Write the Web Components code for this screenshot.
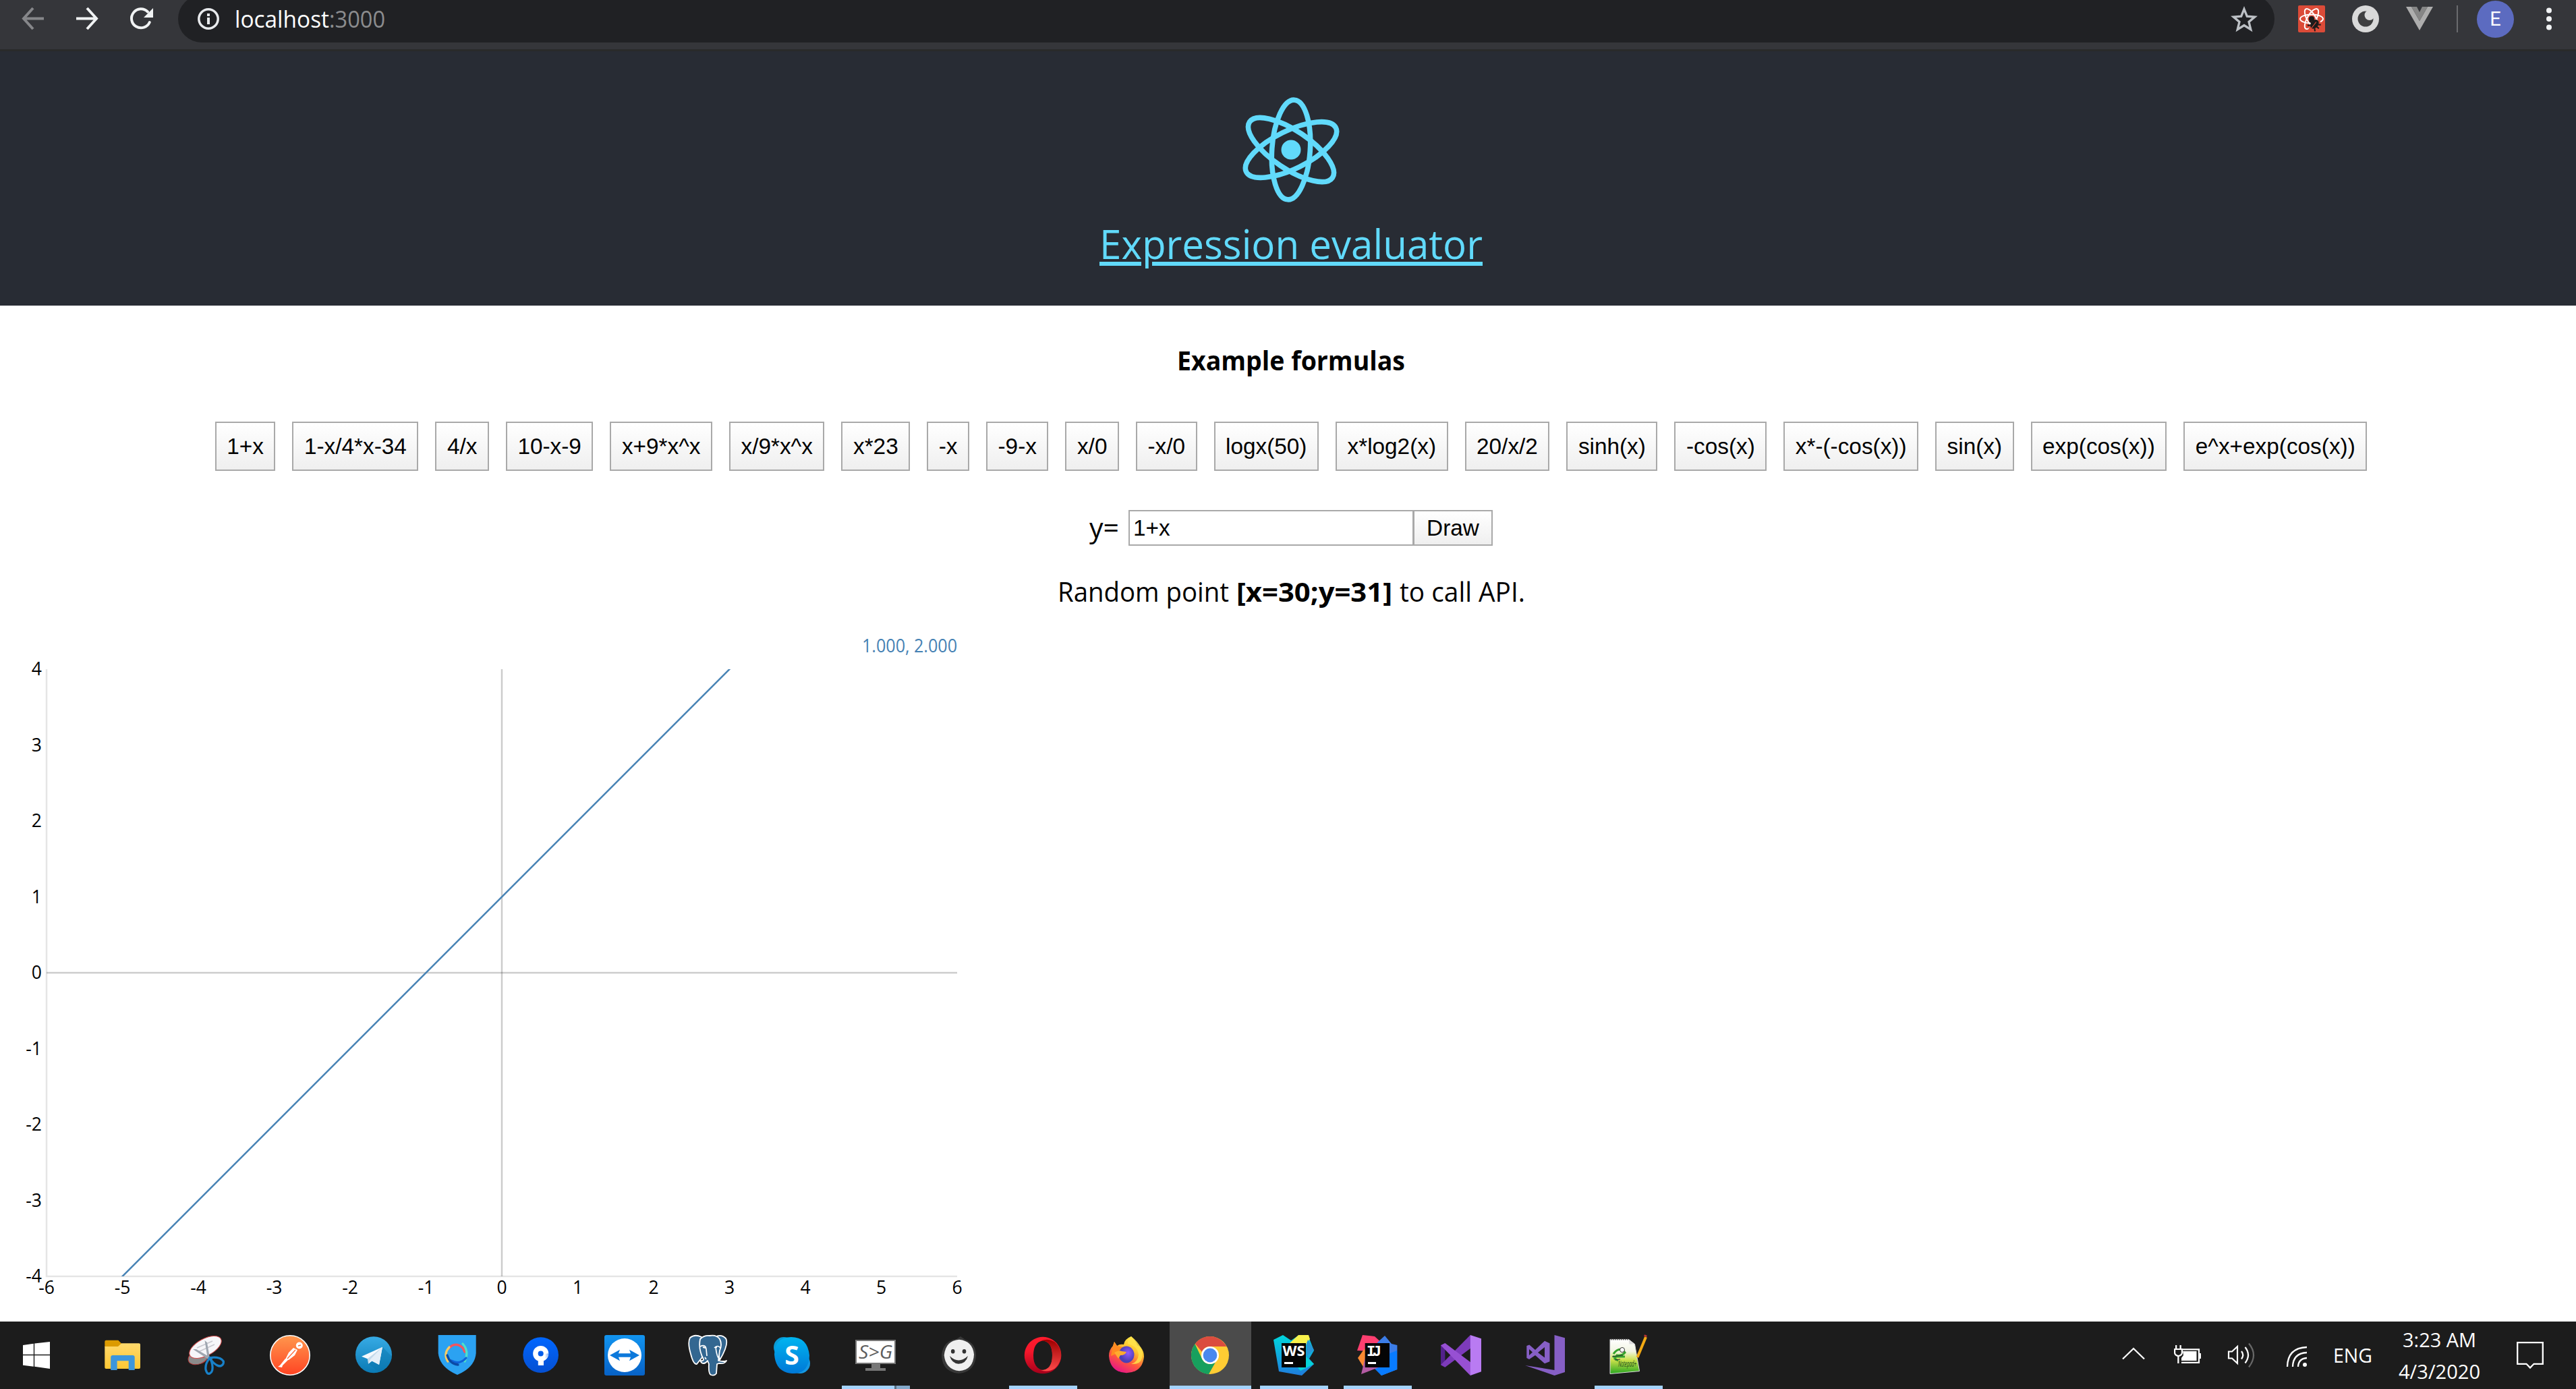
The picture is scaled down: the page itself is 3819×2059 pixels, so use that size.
<!DOCTYPE html>
<html lang="en">
<head>
<meta charset="utf-8">
<title>Expression evaluator</title>
<style>
html,body{margin:0;padding:0;height:100%;overflow:hidden;background:#fff}
body{font-family:"Open Sans","Noto Sans",sans-serif}
</style>
</head>
<body>
<desktop-screen></desktop-screen>
<script>
const define = (name, html, setup) => customElements.define(name, class extends HTMLElement {
  connectedCallback() {
    if (this.shadowRoot) return;
    const t = document.createElement('template');
    t.innerHTML = typeof html === 'function' ? html(this) : html;
    this.attachShadow({mode: 'open'}).appendChild(t.content.cloneNode(true));
    if (setup) setup(this);
  }
});

/* Text condensed or expanded to an exact advance width. */
define('fit-text', `<style>:host{display:block;white-space:nowrap;flex:none}span{display:inline-block;transform-origin:0 50%;text-decoration:inherit;text-decoration-thickness:inherit}</style><span><slot></slot></span>`, el => {
  const w = +el.getAttribute('w');
  el.style.width = w + 'px';
  const s = el.shadowRoot.querySelector('span');
  s.style.transform = `scaleX(${w / s.getBoundingClientRect().width})`;
});

const ICONS = {
  back: `<g fill="none" stroke="#86878a" stroke-width="4"><path d="M36 19.5H7M20 4L6 19.5L20 35"/></g>`,
  forward: `<g fill="none" stroke="#f1f3f4" stroke-width="4"><path d="M5 19.5h29M21 4l14 15.500L21 35"/></g>`,
  reload: `<path d="M31.800 25A14 14 0 1 1 29 9.500" fill="none" stroke="#f1f3f4" stroke-width="4" stroke-linecap="round"/><path d="M37 4v14H23z" fill="#f1f3f4"/>`,
  info: `<circle cx="20" cy="20" r="14.200" fill="none" stroke="#e8eaed" stroke-width="3.500"/><path d="M18 18h4v10h-4zM18 12h4v4h-4z" fill="#e8eaed"/>`,
  star: `<path d="M20 5.500l4.300 10.600 11.500.9-8.800 7.400 2.800 11.200L20 29.500l-9.800 6.100L13 24.400 4.200 17l11.500-.9z" fill="none" stroke="#bdc1c6" stroke-width="3.300"/>`,
  reactdev: `<rect width="40" height="40" rx="2" fill="#db4b38"/><g fill="none" stroke="#fff" stroke-width="2"><ellipse cx="20" cy="20" rx="17" ry="6.500"/><ellipse cx="20" cy="20" rx="17" ry="6.500" transform="rotate(60 20 20)"/><ellipse cx="20" cy="20" rx="17" ry="6.500" transform="rotate(120 20 20)"/></g><path d="M22 21l11 2-1 12-10 3-7-2z" fill="#db4b38"/><circle cx="20" cy="20" r="4" fill="#1b1b1b"/><g transform="rotate(38 25 27)"><ellipse cx="25" cy="28" rx="5.500" ry="7.500" fill="#1b1b1b"/><path d="M17 23l3 2M33 23l-3 2M16 29h18M18 36l3-3M32 36l-3-3" stroke="#1b1b1b" stroke-width="2"/><path d="M25 24v12" stroke="#db4b38"/></g>`,
  moon: `<circle cx="20" cy="20" r="20" fill="#d9d9d9"/><circle cx="20" cy="20" r="11.500" fill="#3f3f40"/><circle cx="26" cy="14.500" r="7.500" fill="#d9d9d9"/>`,
  vue: `<path d="M0 2h8l12 21L32 2h8L20 37z" fill="#adadad"/><path d="M8 2h8l4 8 4-8h8L20 23z" fill="#868686"/>`,
  dots: `<g fill="#f1f3f4"><circle cx="20" cy="7.500" r="4"/><circle cx="20" cy="20" r="4"/><circle cx="20" cy="32.500" r="4"/></g>`,
  chevron: `<path d="M4 25.500L20 10l16 15.500" fill="none" stroke="#fff" stroke-width="2.300"/>`,
  battery: `<path d="M11 11.300h26v19.500H11" fill="none" stroke="#fff" stroke-width="2.200"/><path d="M13 14h20.500v14H11v-4l3-4zM37 17h3v8h-3zM2 5h2.300v5H2zM8.500 5h2.300v5H8.500zM0 10h13v7q-1 4-5.500 5v10H5.200V22Q1 21 0 17z" fill="#fff"/><path d="M2.200 12h8.600v5q-1.600 3-4.300 3T2.200 17z" fill="#1c1c1c"/>`,
  speaker: `<g fill="none" stroke="#fff" stroke-width="2.200"><path d="M1 14.500h5L14 7v25l-8-7.500H1z"/><path d="M20 14q4.500 5.500 0 11.500M25.500 8q9 11.500 0 23.500"/><path d="M31 2.500q14 17 0 35" stroke="#686868"/></g>`,
  wifi: `<g fill="none" stroke="#fff" stroke-width="2.300"><path d="M8 37Q8.500 9 37 8M16 37q.5-20 21-21M24 37q.5-12 13-13"/></g><circle cx="34" cy="34" r="3" fill="#fff"/>`,
  notice: `<path d="M1.200 1.200h37.600v31.600H25.500L20 38.500l-5.500-5.700H1.200z" fill="none" stroke="#fff" stroke-width="2.300"/>`,
};

const APPS = {
  start: `<path d="M12 17l15.800-2.200v16H12zM29.200 14.600L52 12v18.800H29.200zM12 32.200h15.800v16.500L12 46.700zM29.200 32.200H52V52l-22.800-3.200z" fill="#fff"/>`,
  explorer: `<defs><linearGradient id="e" x2="0" y2="1"><stop stop-color="#ffd96c"/><stop offset="1" stop-color="#fcc734"/></linearGradient></defs><path d="M5.300 12q0-2.300 2-2.300h18L30 14.500 26 20H5.300z" fill="#dc9b00"/><path d="M5.300 19H25l5-4.700h26q2 0 2 2V50q0 2-2 2H7.300q-2 0-2-2z" fill="url(#e)"/><path d="M14.200 54V35q0-3 3-3h29.500q3 0 3 3v19h-9V40.300H23.600V54z" fill="#3c96dc"/>`,
  snip: `<ellipse cx="20" cy="35" rx="15.500" ry="10" transform="rotate(-20 20 35)" fill="#8b8b8b" stroke="#b63b3b"/><ellipse cx="30.500" cy="20" rx="26" ry="12.500" transform="rotate(-28 30.500 20)" fill="#f6f6f9" stroke="#d34b4b"/><path d="M18 21l23-10M20 27l24-11" stroke="#c9c9d0" stroke-width="1.800"/><path d="M29.500 10l3.500 3 4 23-3.500-1zM12 23l5 0 24 14-3 3z" fill="#9fa6b0"/><g fill="none" stroke="#1881c9" stroke-width="3.300"><path d="M37 36q7-2 15 .5 7 3.500 5 8-3 5.500-9 2.500T37 36z"/><path d="M37 36q-7 8-6 17 2 8 6 6 4.500-2 4-10T37 36z"/></g>`,
  postman: `<defs><linearGradient id="p" x2="0" y2="1"><stop stop-color="#ff974d"/><stop offset="1" stop-color="#ff4423"/></linearGradient></defs><circle cx="32" cy="32" r="29.200" fill="url(#p)" stroke="#fff" stroke-width="1.600"/><circle cx="45.800" cy="17.500" r="5" fill="#fff"/><path d="M37 21l6 3-4 8-9 7-5-1 5-10zM25 37l4 2-8 8-1 3-6-1 3-2z" fill="#fff"/><path d="M40 24L28 37M44 18l4-1" stroke="#ff6a38" stroke-width="1.300"/>`,
  telegram: `<defs><linearGradient id="t" x2="0" y2="1"><stop stop-color="#37abe5"/><stop offset="1" stop-color="#0a7ab5"/></linearGradient></defs><circle cx="32" cy="31.200" r="27" fill="url(#t)"/><path d="M45 19.700L59 34q-3 17-19 23L24 44.700z" fill="#0b76ae" opacity=".45"/><path d="M45 19.700L14 33.700l8.800 3.500L40 46z" fill="#f4f9fd"/><path d="M45 19.700L22.800 37.200 24 44.700l5-4.500z" fill="#c2d9ea"/><path d="M45 19.700L27 38l-3 6.700 6-4.500L40 46z" fill="#e4eff8"/>`,
  shield: `<path d="M3.700 2h56v27Q58 50 32 61 6 50 3.700 29z" fill="#2ba2f2"/><g fill="none" stroke-width="3.300" stroke-linecap="round"><path d="M19 22q10-11 21-1l3 6" stroke="#f25560"/><path d="M20 20q-9 10-2 21" stroke="#f8cc62"/><path d="M40 15q10 11 3 26" stroke="#4fe0c8"/><path d="M45 36q-10 11-22 4" stroke="#0f62d8"/><path d="M17 32q4 13 16 14" stroke="#0b4aa5"/></g>`,
  sourcetree: `<defs><linearGradient id="s" x2="0" y2="1"><stop stop-color="#0066ff"/><stop offset="1" stop-color="#0550d2"/></linearGradient><linearGradient id="s2"><stop offset=".5" stop-color="#fff"/><stop offset="1" stop-color="#7ea8f4"/></linearGradient></defs><circle cx="31.700" cy="31.600" r="26.300" fill="url(#s)"/><circle cx="31.700" cy="29.500" r="7.800" fill="none" stroke="#fff" stroke-width="7.500"/><path d="M35 39q8-3 8.300-10l-6 1-5 7z" fill="url(#s2)"/><path d="M27.800 35H36v12h-8.200z" fill="#fff"/>`,
  teamviewer: `<defs><linearGradient id="v" x2="0" y2="1"><stop stop-color="#1294ef"/><stop offset="1" stop-color="#0762c7"/></linearGradient></defs><rect x="2" y="2" width="60" height="60" rx="3" fill="url(#v)"/><circle cx="32" cy="32" r="25" fill="#fff"/><path d="M10 32l15-8.300-2 5.500h18l-2-5.500L54 32l-15 8.300 2-5.500H23l2 5.500z" fill="#0d79db"/>`,
  postgres: `<g fill="#336791" stroke="#fff" stroke-width="1.800" stroke-linejoin="round"><path d="M22 5Q12 0 5 6q-4 7 1 24 4 16 9 15l8-10zM42 5q9-5 16 2 3 5-1 16-3 8-8 16z"/><path d="M20 8q6-6 14-5 10-2 15 5 4 8 0 17l-2 15q8 2 12 0-2 5-11 4l-3 1-1 14q-3 4-8 2-4-2-3-16l-2-5q-4 6-9 3l-2-3q5 1 5-2-8-15-5-30z"/></g><path d="M20 19q8-4 9 4l1 10M41 21q5-5 9 0M43 19q1 12 4 17M29 38l-2-3" fill="none" stroke="#fff" stroke-width="1.700"/><path d="M24 20l4 1M42 20h3" stroke="#fff" stroke-width="2"/>`,
  skype: `<defs><linearGradient id="k" x2="0" y2="1"><stop stop-color="#00b5f0"/><stop offset="1" stop-color="#0078d7"/></linearGradient></defs><circle cx="20" cy="20" r="15" fill="#0a9bd5"/><circle cx="44" cy="44" r="15" fill="#1598e2"/><path d="M31 5q24 0 27 27 0 12-6 20-7 8-20 7Q8 57 6 31q0-12 6-19 7-7 19-7z" fill="url(#k)"/><text x="32" y="46" font-size="39" font-weight="700" text-anchor="middle" fill="#fff" font-family="Open Sans,sans-serif">S</text>`,
  sg: `<path d="M26 44h13v7h8v4H17v-4h9z" fill="#777"/><rect x="3" y="10" width="58" height="34" fill="#fff" stroke="#777" stroke-width="2"/><text x="7" y="37" font-size="27" font-style="italic" textLength="50" lengthAdjust="spacingAndGlyphs" fill="#5d5d5d" font-family="Open Sans,sans-serif">S&gt;G</text>`,
  smile: `<path d="M34 4l7 5q16 5 16 24-2 24-26 26Q6 56 6 31 9 10 28 8z" fill="#383838"/><path d="M32 8.700q20 2 22 22-1 23-22 24.600Q12 53 9.700 32 12 10 32 8.700z" fill="#efefef"/><ellipse cx="22.700" cy="26.300" rx="2.800" ry="3.300" fill="#333"/><ellipse cx="39.500" cy="26.300" rx="2.800" ry="3.300" fill="#333"/><path d="M18 33q13 13 27 0-3 11.500-14 11.700Q21 44 18 33z" fill="#333"/>`,
  opera: `<defs><linearGradient id="o" x2="0" y2="1"><stop stop-color="#ff1b2d"/><stop offset=".4" stop-color="#f5172b"/><stop offset="1" stop-color="#a4001b"/></linearGradient><linearGradient id="o2" x2="0" y2="1"><stop stop-color="#9c0000"/><stop offset="1" stop-color="#ff4b4b"/></linearGradient></defs><path fill-rule="evenodd" d="M32 4.700a27.300 27.300 0 1 0 .1 0zM32 10.300q14 2 14 22T32 54Q18 51 18 32t14-21.700z" fill="url(#o)"/><path d="M29 10.500Q40 6 50 12.500 59 21 59 32t-9 19.500Q40 58 29 54q17 0 17-22T29 10.500z" fill="url(#o2)"/>`,
  firefox: `<defs><linearGradient id="f" x1=".8" x2=".3" y2="1"><stop stop-color="#fff44f"/><stop offset=".35" stop-color="#ffc32f"/><stop offset=".65" stop-color="#ff5a3b"/><stop offset="1" stop-color="#e5128a"/></linearGradient><radialGradient id="f2" cx=".6" cy=".4"><stop stop-color="#9059ff"/><stop offset="1" stop-color="#4b3fb5"/></radialGradient></defs><path d="M39 4q7 7 9 13l5 3q5 6 5 14-2 23-26 24.300Q8 57 6 33q0-9 6-15l2-6 4 6q4-3 10-2 1-8 11-12z" fill="url(#f)"/><path d="M12 18l2-6 4 6 8 2-5 8-12 5z" fill="#ff8b22"/><path d="M39 4q-6 6-5 11 14 3 16 16-1 11-11 14 14 1 16-9 2-8-2-16-5-9-14-16z" fill="#ffe14a" opacity=".85"/><ellipse cx="32" cy="31" rx="11.500" ry="12.500" fill="url(#f2)"/><path d="M14 28q7-4 11-2l7 1q-2 5-9 5l-3 5z" fill="#ffab2e"/>`,
  chrome: `<circle cx="32" cy="32" r="28" fill="#fc3"/><path d="M32 4a28 28 0 0 1 24.300 15H32a13 13 0 0 0-12 8L9.800 15A28 28 0 0 1 32 4z" fill="#db4c3f"/><path d="M9.600 15.200A28 28 0 0 0 30 60l10-17.800a13 13 0 0 1-19.500-4z" fill="#17a05e"/><circle cx="32" cy="32" r="13" fill="#fff"/><circle cx="32" cy="32" r="10.400" fill="#4a88ee"/>`,
  webstorm: `<defs><linearGradient id="w" x2="0" y2="1"><stop stop-color="#00d6dd"/><stop offset="1" stop-color="#1f7ddd"/></linearGradient></defs><path d="M2 9l14-7 12 8L40 2h13l9 23-7 12 7 8-18 17L10 56z" fill="url(#w)"/><path d="M26 14L39 2h15l2 6-13 18z" fill="#f8f14b"/><path d="M53 9l9 15-11 9V14z" fill="#2795d5"/><path d="M49 33l13 12-20 10-5-6z" fill="#06d3d8"/><rect x="14" y="14" width="36" height="36" fill="#050505"/><text x="15.500" y="33" font-size="21" font-weight="700" textLength="33" lengthAdjust="spacingAndGlyphs" fill="#fff" font-family="Open Sans,sans-serif">WS</text><path d="M18 42h13v3H18z" fill="#fff"/>`,
  intellij: `<path d="M2 25L10 2l18 2 13 12-16 10z" fill="#fe3f70"/><path d="M3 36l10-14 8 24-10 3z" fill="#f98a32"/><path d="M32 13L43 3l10 12 8.400 2v36L38 62 28 50z" fill="#3c7de8"/><path d="M48 30l13-5v28L38 62 26 50z" fill="#087bff"/><path d="M14 35l20 15L8 60z" fill="#b45ba4"/><rect x="13.700" y="14" width="36.300" height="36" fill="#050505"/><text x="16" y="33" font-size="22" font-weight="700" textLength="22" fill="#fff" font-family="Liberation Mono,monospace">IJ</text><path d="M18 42h12v3H18z" fill="#fff"/>`,
  vs: `<path d="M8.400 49.700L2 46.300v-29L8.400 14z" fill="#52218a"/><path d="M8.400 49.700L2 46.300 45.800 2 47 21z" fill="#7d3bbb"/><path d="M2 17.300L8.400 14 47 43l-1.200 19z" fill="#9750d3"/><path d="M45.800 2L62 7.300v49L45.800 62z" fill="#b97bf2"/>`,
  blend: `<path d="M46.500 2L62 6.300V57l-15.500 5L3 47l43.500 7z" fill="#865fc5"/><path fill-rule="evenodd" d="M5.300 18l4-1.500L18 24l14-13.300 7.500 3.500v27L32 44.300 18 32l-9 6-3.700-2zM9 23v9l5-4.500zM22 28l10 7.500V20z" fill="#865fc5"/>`,
  notepad: `<defs><linearGradient id="n" x2="0" y2="1"><stop stop-color="#fff"/><stop offset=".35" stop-color="#f1f4e2"/><stop offset=".6" stop-color="#cbe14b"/><stop offset="1" stop-color="#27a51f"/></linearGradient></defs><path d="M5 8.500h27.500l9 7 7 40L5 59.500z" fill="url(#n)" stroke="#ddd"/><path d="M6 8.500h27" stroke="#555" stroke-width="2" stroke-dasharray="1.500 1.500"/><path d="M32.500 8.500l1 7h8z" fill="#ddd"/><path d="M10 30q5-8 13-7l4 5q-4 5-12 4l-3 5 5 3M9 34h18" fill="none" stroke="#35a22c" stroke-width="3"/><circle cx="23" cy="24" r="3.500" fill="#fff" stroke="#333"/><path d="M8 34l16-2M12 39l8-1" stroke="#333" stroke-width="1.200"/><path d="M58 5L45.500 35" stroke="#f2a913" stroke-width="4"/><path d="M57 4.500l1-2.500" stroke="#b33" stroke-width="4"/><text x="17" y="49" font-size="12" font-style="italic" textLength="27" lengthAdjust="spacingAndGlyphs" fill="#234a18" font-family="Open Sans,sans-serif">Notepad+</text>`,
};

define('ui-icon', el => `<style>:host{display:block;flex:none;width:40px;height:40px}svg{display:block;overflow:visible}</style><svg width="40" height="40" viewBox="0 0 40 40">${ICONS[el.getAttribute('name')]}</svg>`);

define('browser-bar', `<style>
:host{display:block;background:#35363a;height:73px;border-bottom:3px solid #292a2a}
.row{display:flex;align-items:center;height:56px;padding-left:29px}
.fwd{margin-left:39px}.rel{margin-left:42px}
.box{display:flex;align-items:center;box-sizing:border-box;flex:none;width:3108px;height:70px;margin-left:34px;padding:0 25px;border-radius:35px;background:#202124;color:#fff;font-size:34px;line-height:56px}
.url{display:flex;flex:1;margin-left:19px}.port{color:#8b8c8e}
.ext{display:flex;gap:40px;margin-left:35px}
.sep{width:2px;height:40px;background:#6a6b6e;margin-left:35px}
.av{width:55px;height:55px;border-radius:50%;background:#5c6bc0;color:#fff;margin-left:28px;display:flex;align-items:center;justify-content:center;font:29px Roboto,sans-serif}
.menu{margin-left:32px}
</style><div class="row"><ui-icon name="back"></ui-icon><ui-icon class="fwd" name="forward"></ui-icon><ui-icon class="rel" name="reload"></ui-icon>
<div class="box"><ui-icon name="info"></ui-icon><div class="url"><fit-text w="140">localhost</fit-text><fit-text class="port" w="83">:3000</fit-text></div><ui-icon name="star"></ui-icon></div>
<div class="ext"><ui-icon name="reactdev"></ui-icon><ui-icon name="moon"></ui-icon><ui-icon name="vue"></ui-icon></div><div class="sep"></div><div class="av">E</div><ui-icon class="menu" name="dots"></ui-icon></div>`);

define('app-header', `<style>
:host{display:flex;flex-direction:column;align-items:center;box-sizing:border-box;height:377px;padding:66px 0 0 9px;background:#282c34}
svg{display:block}
.t{margin-top:16px;font-size:61px;line-height:85px;color:#61dafb;text-decoration:underline;text-decoration-thickness:6px;text-underline-offset:4px}
</style><svg width="160" height="160" viewBox="-80 -80 160 160"><g fill="none" stroke="#61dafb" stroke-width="7.600"><ellipse rx="28.300" ry="74" transform="rotate(3.900)"/><ellipse rx="28.300" ry="74" transform="rotate(63.900)"/><ellipse rx="28.300" ry="74" transform="rotate(123.900)"/></g><circle r="14.500" fill="#61dafb"/></svg>
<fit-text class="t" w="568">Expression evaluator</fit-text>`);

define('formula-button', `<style>
:host{display:flex;align-items:center;justify-content:center;box-sizing:border-box;height:73px;padding:0 15.530px;border:2px solid #a9a9a9;background:linear-gradient(#fff,#efefef);font:33.333px "Liberation Sans",Arial,sans-serif;color:#000;white-space:nowrap}
:host([slim]){height:53px;width:118px;padding:0;margin-left:-1px}
</style><slot></slot>`);

const FORMULAS = ['1+x','1-x/4*x-34','4/x','10-x-9','x+9*x^x','x/9*x^x','x*23','-x','-9-x','x/0','-x/0','logx(50)','x*log2(x)','20/x/2','sinh(x)','-cos(x)','x*-(-cos(x))','sin(x)','exp(cos(x))','e^x+exp(cos(x))'];

define('formula-panel', `<style>
:host{display:flex;flex-direction:column;align-items:center;padding:54px 0 0 9px;color:#000;font-size:39.500px;line-height:54px}
.h{font-weight:700}
.list{display:flex;gap:25px;margin-top:64px}
.form{display:flex;align-items:center;margin-top:58px;height:53px}
.form fit-text{margin-top:-2px}
.field{box-sizing:border-box;width:423px;height:53px;margin-left:14px;padding-left:5px;border:2px solid #a9a9a9;font:33.333px/49px "Liberation Sans",Arial,sans-serif}
.pt{display:flex;gap:11px;margin-top:41px}
</style><fit-text class="h" w="338">Example formulas</fit-text>
<div class="list">${FORMULAS.map(f => `<formula-button>${f}</formula-button>`).join('')}</div>
<div class="form"><fit-text w="44">y=</fit-text><div class="field">1+x</div><formula-button slim>Draw</formula-button></div>
<div class="pt"><fit-text w="254">Random point</fit-text><fit-text w="231"><b>[x=30;y=31]</b></fit-text><fit-text w="186">to call API.</fit-text></div>`);

const yLabels = [4,3,2,1,0,-1,-2,-3,-4].map((v, i) => `<text x="62" y="${97 + i * 112.5}" text-anchor="end">${v}</text>`).join('');
const xLabels = Array.from({length: 13}, (_, i) => `<text x="${69 + i * 112.5}" y="1014" text-anchor="middle">${i - 6}</text>`).join('');

define('function-plot', `<style>:host{display:block}svg{display:block;font:26.500px "Open Sans","Noto Sans",sans-serif}</style>
<svg width="1500" height="1055" viewBox="0 0 1500 1055">
<text x="1278" y="62.500" textLength="141" lengthAdjust="spacingAndGlyphs" fill="#4682b4">1.000, 2.000</text>
<g fill="none" stroke="#000" stroke-width="2.500"><path d="M69 88V988H1419" opacity=".1"/><path d="M744 88V988" opacity=".2"/><path d="M69 538H1419" opacity=".2"/></g>
<clipPath id="area"><path d="M69 88H1419V988H69z"/></clipPath>
<path d="M175.300 994.200L1087.700 81.800" stroke="#4682b4" stroke-width="2.500" clip-path="url(#area)"/>
${yLabels}${xLabels}</svg>`);

define('task-item', el => `<style>
:host{display:flex;flex:none;align-items:center;justify-content:center;width:124px;height:100px;position:relative}
:host([active])::before{content:"";position:absolute;inset:0 1px 0 2px;background:#4b4b4b}
:host([open])::after{content:"";position:absolute;left:12px;right:11px;bottom:0;height:5px;background:#a4d3fe}
:host([active])::after{left:2px;right:1px}
:host([multi])::after{background:linear-gradient(90deg,#a4d3fe 78px,#597084 78px 81px,#84a9cb 81px)}
:host([wide]){width:108px;margin-right:12px}
svg{position:relative;display:block}
</style><svg width="64" height="64" viewBox="0 0 64 64">${APPS[el.getAttribute('app')]}</svg>`);

define('task-bar', `<style>
:host{display:flex;align-items:center;height:100px;background:#1c1c1c;color:#fff;font-size:29.500px}
.tray{display:flex;align-items:center;margin-left:auto;padding-right:48px}
.tray ui-icon+ui-icon{margin-left:40px}
.lang{margin-left:36px;line-height:40px}
.clock{display:flex;flex-direction:column;align-items:center;width:122px;margin-left:38px;line-height:47px}
.note{margin-left:54px}
</style><task-item app="start" wide></task-item><task-item app="explorer"></task-item><task-item app="snip"></task-item><task-item app="postman"></task-item><task-item app="telegram"></task-item><task-item app="shield"></task-item><task-item app="sourcetree"></task-item><task-item app="teamviewer"></task-item><task-item app="postgres"></task-item><task-item app="skype"></task-item><task-item app="sg" open multi></task-item><task-item app="smile"></task-item><task-item app="opera" open></task-item><task-item app="firefox"></task-item><task-item app="chrome" open active></task-item><task-item app="webstorm" open></task-item><task-item app="intellij" open></task-item><task-item app="vs"></task-item><task-item app="blend"></task-item><task-item app="notepad" open></task-item>
<div class="tray"><ui-icon name="chevron"></ui-icon><ui-icon name="battery"></ui-icon><ui-icon name="speaker"></ui-icon><ui-icon name="wifi"></ui-icon><fit-text class="lang" w="58">ENG</fit-text><div class="clock"><fit-text w="109">3:23 AM</fit-text><fit-text w="121">4/3/2020</fit-text></div><ui-icon class="note" name="notice"></ui-icon></div>`);

define('desktop-screen', `<style>:host{display:flex;flex-direction:column;width:3819px;height:2059px;overflow:hidden;background:#fff}function-plot{flex:1}</style>
<browser-bar></browser-bar><app-header></app-header><formula-panel></formula-panel><function-plot></function-plot><task-bar></task-bar>`);
</script>
</body>
</html>
